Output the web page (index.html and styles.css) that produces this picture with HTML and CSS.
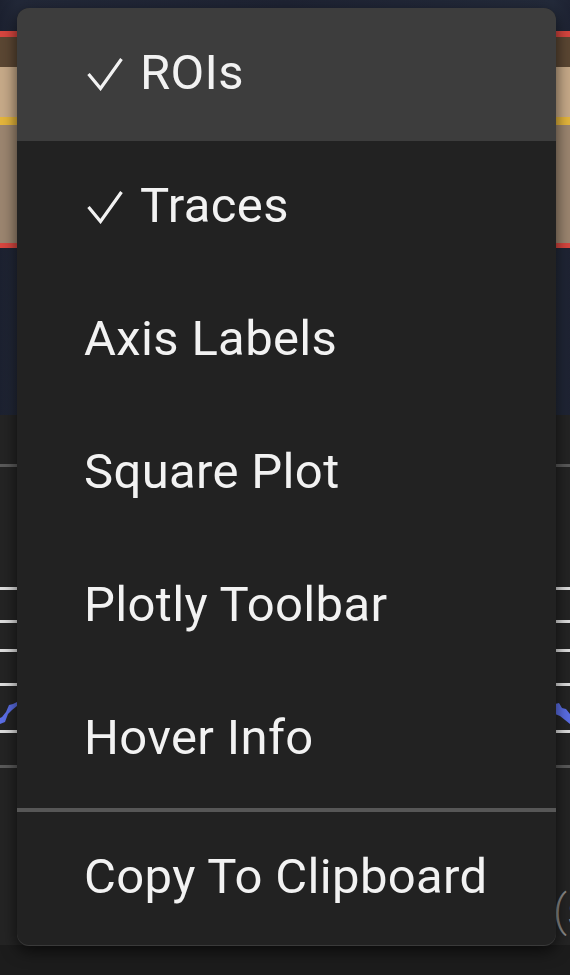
FILE: index.html
```html
<!DOCTYPE html>
<html>
<head>
<meta charset="utf-8">
<link rel="stylesheet" href="styles.css">
</head>
<body>
<div class="page">
  <div class="backdrop">
    <div class="viewer">
      <div class="band"></div>
    </div>
    <div class="plot">
      <div class="tick tick-gray t1"></div>
      <div class="tick tick-white t2"></div>
      <div class="tick tick-white t3"></div>
      <div class="tick tick-white t4"></div>
      <div class="tick tick-white t5"></div>
      <svg class="trace" width="570" height="26" viewBox="0 0 570 26">
        <path d="M0 22 L5 20 L8 12 L12 8 L17 4 L17 0 L13 2 L9 3 L6 10 L2 15 L0 16 Z" fill="#5b6ee6"/>
        <path d="M555 2 L559 1 L562 6 L566 7 L570 12 L570 22 L565 18 L560 14 L555 12 Z" fill="#5b6ee6"/>
      </svg>
      <div class="tick tick-white t6"></div>
      <div class="tick tick-gray t7"></div>
      <div class="plot-label">(s</div>
    </div>
    <div class="floor"></div>
  </div>

  <div class="menu">
    <div class="item active">
      <svg class="check" width="36" height="34" viewBox="0 0 36 34"><polyline points="1.5,17 13.5,31.5 34.5,2" fill="none" stroke="#f2f2f2" stroke-width="3.2" stroke-linejoin="miter"/></svg>
      <span>ROIs</span>
    </div>
    <div class="item">
      <svg class="check" width="36" height="34" viewBox="0 0 36 34"><polyline points="1.5,17 13.5,31.5 34.5,2" fill="none" stroke="#f2f2f2" stroke-width="3.2" stroke-linejoin="miter"/></svg>
      <span>Traces</span>
    </div>
    <div class="item"><span>Axis Labels</span></div>
    <div class="item"><span>Square Plot</span></div>
    <div class="item"><span>Plotly Toolbar</span></div>
    <div class="item"><span>Hover Info</span></div>
    <div class="divider"></div>
    <div class="item"><span>Copy To Clipboard</span></div>
  </div>
</div>
</body>
</html>
```

FILE: styles.css
```css
html, body {
  margin: 0;
  padding: 0;
  background: #1b1b1b;
}
body {
  width: 570px;
  height: 975px;
  overflow: hidden;
  font-family: Roboto, "Liberation Sans", sans-serif;
}
.page {
  position: relative;
  width: 570px;
  height: 975px;
}
.backdrop {
  display: flex;
  flex-direction: column;
  width: 570px;
  height: 975px;
}
.viewer {
  height: 415px;
  padding-top: 31px;
  box-sizing: border-box;
  background: linear-gradient(90deg, #1c2130 0%, #222838 3%, #1e2333 50%, #232a3a 97%, #1e2333 100%);
}
.band {
  height: 217px;
  background:
    linear-gradient(180deg,
      #d8463f 0px, #d8463f 6px,
      #5b4733 6px, #5b4733 36px,
      #c7aa89 36px, #c7aa89 86px,
      #e5b63c 86px, #e5b63c 94px,
      #9c8670 94px, #9c8670 212px,
      #d8463f 212px, #d8463f 217px);
}
.plot {
  height: 530px;
  background: #242424;
  display: flex;
  flex-direction: column;
}
.tick {
  height: 3px;
  flex: none;
}
.tick-gray { background: #5a5a5a; }
.tick-white { background: #dedede; }
.t1 { margin-top: 49px; }
.t2 { margin-top: 120px; }
.t3 { margin-top: 30px; }
.t4 { margin-top: 26px; }
.t5 { margin-top: 31px; }
.trace {
  display: block;
  flex: none;
  margin-top: 16px;
}
.t6 { margin-top: 2px; }
.t7 { margin-top: 32px; }
.plot-label {
  margin-top: 118px;
  padding-left: 553px;
  white-space: nowrap;
  overflow: hidden;
  font-size: 44px;
  font-weight: 300;
  color: #8a8a8a;
  line-height: 50px;
}
.floor {
  flex: 1;
  background: #1c1c1c;
}
.menu {
  position: absolute;
  left: 17px;
  top: 8px;
  width: 539px;
  background: #222222;
  border-radius: 12px;
  overflow: hidden;
  box-shadow: 0 1px 0 #3a3a3a, 0 6px 16px rgba(0, 0, 0, 0.65);
}
.item {
  height: 133px;
  display: flex;
  align-items: center;
  padding-left: 67px;
  color: #f2f2f2;
  font-size: 49px;
  letter-spacing: 0.35px;
}
.item span {
  display: block;
  margin-top: -4px;
}
.item.active {
  background: #3d3d3d;
}
.check {
  display: block;
  margin-left: 3px;
  margin-right: 17px;
  margin-top: -2px;
}
.divider {
  height: 4px;
  margin-top: 2px;
  background: #575757;
}
```
